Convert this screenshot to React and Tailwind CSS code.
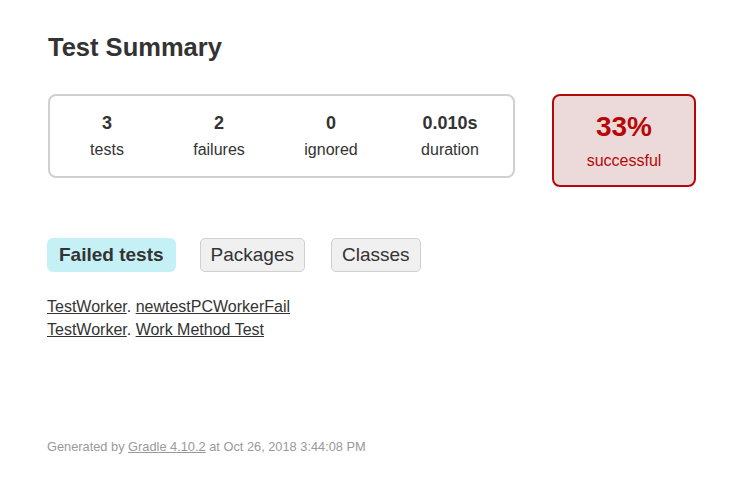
import React from 'react';

const Counter = ({ value, label, width }) => (
  <div className={`flex flex-col items-center ${width}`}>
    <div className="text-[18px] font-bold leading-[22px]">{value}</div>
    <div className="text-[16px] leading-[20px] mt-[6px]">{label}</div>
  </div>
);

const App = () => {
  const counters = [
    { value: '3', label: 'tests', width: 'w-[112px]' },
    { value: '2', label: 'failures', width: 'w-[112px]' },
    { value: '0', label: 'ignored', width: 'w-[112px]' },
    { value: '0.010s', label: 'duration', width: 'w-[126px]' },
  ];

  const failed = [
    { cls: 'TestWorker', test: 'newtestPCWorkerFail' },
    { cls: 'TestWorker', test: 'Work Method Test' },
  ];

  return (
    <div className="min-h-[477px] bg-white text-[#333] pl-[48px] pt-[31px] font-['Liberation_Sans',Arial,sans-serif]">
      <h1 className="text-[25.5px] font-bold leading-[32px]">Test Summary</h1>

      <div className="flex items-start mt-[31px]">
        <div className="w-[467px] h-[84px] border-2 border-[#d0d0d0] rounded-[8px] flex items-center pl-[1px]">
          {counters.map((c, i) => (
            <Counter key={i} {...c} />
          ))}
        </div>
        <div className="ml-[37px] w-[144px] h-[93px] border-2 border-[#b60808] bg-[#ecdada] rounded-[8px] flex flex-col items-center text-[#b60808]">
          <div className="text-[28px] font-bold leading-[32px] mt-[15px]">33%</div>
          <div className="text-[16px] leading-[20px] mt-[8px]">successful</div>
        </div>
      </div>

      <div className="flex items-center mt-[51px] -ml-[1px]">
        <div className="h-[34px] px-[12px] rounded-[6px] bg-[#c5f0f5] text-[19px] font-bold flex items-center">Failed tests</div>
        <div className="ml-[24px] h-[34px] px-[10px] rounded-[5px] bg-[#f0f0f0] border border-[#d0d0d0] text-[19px] flex items-center">Packages</div>
        <div className="ml-[26px] h-[34px] px-[10px] rounded-[5px] bg-[#f0f0f0] border border-[#d0d0d0] text-[19px] flex items-center">Classes</div>
      </div>

      <div className="mt-[23px] text-[16px] leading-[23px] -ml-[1px]">
        {failed.map((f, i) => (
          <div key={i}>
            <a className="underline">{f.cls}</a>. <a className="underline">{f.test}</a>
          </div>
        ))}
      </div>

      <div className="mt-[96px] text-[12.8px] text-[#999] -ml-[1px]">
        Generated by <a className="underline">Gradle 4.10.2</a> at Oct 26, 2018 3:44:08 PM
      </div>
    </div>
  );
};

export default App;
